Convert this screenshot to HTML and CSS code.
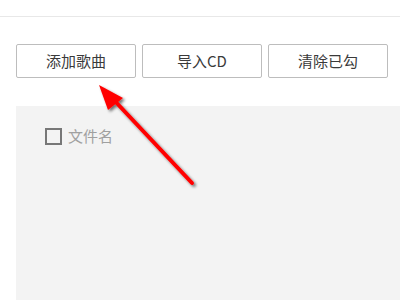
FILE: index.html
```html
<!DOCTYPE html>
<html lang="zh">
<head>
<meta charset="utf-8">
<link rel="stylesheet" href="styles.css">
</head>
<body>
<div class="topbar"></div>
<div class="toolbar">
  <button class="btn">添加歌曲</button>
  <button class="btn">导入CD</button>
  <button class="btn">清除已勾</button>
</div>
<div class="panel">
  <label class="check-row"><span class="box"></span><span class="label">文件名</span></label>
</div>
<svg class="arrow" width="400" height="300" viewBox="0 0 400 300">
  <defs>
    <filter id="sh" x="-20%" y="-20%" width="140%" height="140%">
      <feGaussianBlur in="SourceAlpha" stdDeviation="1.6"/>
      <feOffset dx="1.5" dy="2" result="b"/>
      <feComponentTransfer><feFuncA type="linear" slope="0.55"/></feComponentTransfer>
      <feMerge><feMergeNode/><feMergeNode in="SourceGraphic"/></feMerge>
    </filter>
  </defs>
  <g filter="url(#sh)">
    <line x1="192" y1="183" x2="112" y2="98" stroke="#ff0000" stroke-width="4" stroke-linecap="round"/>
    <polygon points="99,85 123,98 108,110" fill="#ff0000"/>
  </g>
</svg>
</body>
</html>
```
FILE: styles.css
```css
html, body {
  margin: 0;
  padding: 0;
  background: #ffffff;
  width: 400px;
  height: 300px;
  overflow: hidden;
  font-family: "Noto Sans CJK SC", "Liberation Sans", sans-serif;
}
.topbar {
  height: 16px;
  border-bottom: 1px solid #e8e8e8;
}
.toolbar {
  display: flex;
  align-items: flex-start;
  gap: 6px;
  padding: 27px 0 0 16px;
  height: 89px;
  box-sizing: border-box;
}
.btn {
  width: 120px;
  height: 34px;
  border: 1px solid #bdbdbd;
  border-radius: 2px;
  background: #ffffff;
  color: #3a3a3a;
  font-family: "Noto Sans CJK SC", "Liberation Sans", sans-serif;
  font-size: 15px;
  padding: 0;
  line-height: 32px;
}
.panel {
  margin-left: 16px;
  height: 200px;
  background: #f3f3f3;
  padding: 21px 0 0 29px;
  box-sizing: border-box;
}
.check-row {
  display: flex;
  align-items: center;
  gap: 6px;
}
.box {
  width: 17px;
  height: 17px;
  box-sizing: border-box;
  border: 2px solid #777777;
  background: #f3f3f3;
}
.label {
  color: #a0a0a0;
  font-size: 15px;
  line-height: 18px;
}
.arrow {
  position: absolute;
  left: 0;
  top: 0;
  pointer-events: none;
}
```
